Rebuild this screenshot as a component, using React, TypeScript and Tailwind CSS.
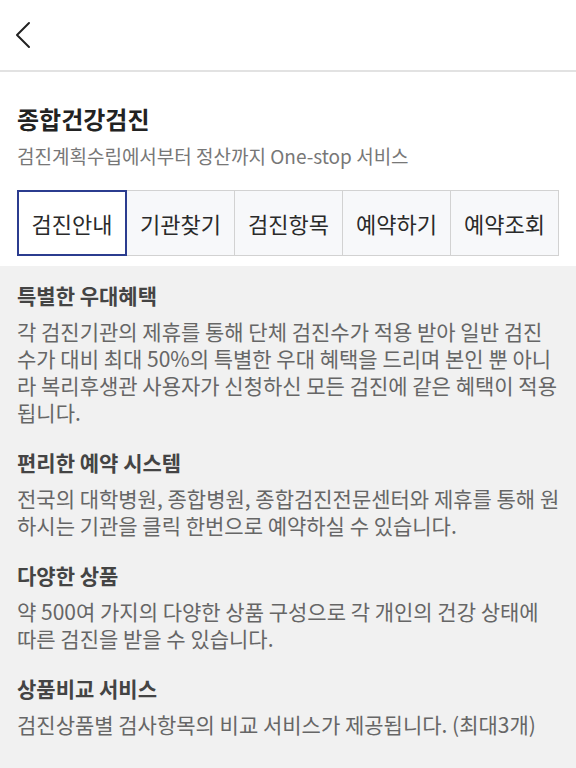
const tabs = ['검진안내', '기관찾기', '검진항목', '예약하기', '예약조회'];

// 원본 화면의 줄바꿈 위치를 그대로 유지
const sections = [
  {
    title: '특별한 우대혜택',
    body: '각 검진기관의 제휴를 통해 단체 검진수가 적용 받아 일반 검진\n수가 대비 최대 50%의 특별한 우대 혜택을 드리며 본인 뿐 아니\n라 복리후생관 사용자가 신청하신 모든 검진에 같은 혜택이 적용\n됩니다.',
  },
  {
    title: '편리한 예약 시스템',
    body: '전국의 대학병원, 종합병원, 종합검진전문센터와 제휴를 통해 원\n하시는 기관을 클릭 한번으로 예약하실 수 있습니다.',
  },
  {
    title: '다양한 상품',
    body: '약 500여 가지의 다양한 상품 구성으로 각 개인의 건강 상태에\n따른 검진을 받을 수 있습니다.',
  },
  {
    title: '상품비교 서비스',
    body: '검진상품별 검사항목의 비교 서비스가 제공됩니다. (최대3개)',
  },
];

export default function App() {
  return (
    <div className="min-h-[768px] bg-white font-['Noto_Sans_CJK_KR','Noto_Sans',sans-serif]">
      <header className="flex h-[72px] items-center border-b-2 border-[#e2e2e2] pl-[15px]">
        <svg width="16" height="28" viewBox="0 0 16 28" fill="none" stroke="#222" strokeWidth="2" strokeLinecap="round" strokeLinejoin="round">
          <polyline points="14,2 2,14 14,26" />
        </svg>
      </header>

      <div className="px-[17px] pt-[32px] pb-[10px]">
        <h1 className="text-[24px] font-bold leading-[30px] text-[#222]">종합건강검진</h1>
        <p className="mt-[10px] text-[19px] leading-[24px] text-[#777]">검진계획수립에서부터 정산까지 One-stop 서비스</p>

        <div className="mt-[22px] grid grid-cols-5 border border-[#d2d2d2] bg-[#f7f8fa]">
          {tabs.map((t, i) => (
            <button
              key={t}
              className={`h-[64px] text-[22px] text-[#2a2a2a] ${i === 0 ? 'z-10 bg-white outline-2 -outline-offset-1 outline-[#2b3c8f]' : 'border-l border-[#d2d2d2]'}`}
            >
              {t}
            </button>
          ))}
        </div>
      </div>

      <main className="bg-[#f1f1f1] pl-[17px] pr-[6px] pt-[15px] pb-[30px]">
        {sections.map((s) => (
          <section key={s.title} className="mb-[22px]">
            <h2 className="text-[21px] font-bold leading-[28px] text-[#444]">{s.title}</h2>
            <p className="mt-[9px] whitespace-pre-line text-[21px] leading-[27px] text-[#666]">{s.body}</p>
          </section>
        ))}
      </main>
    </div>
  );
}
